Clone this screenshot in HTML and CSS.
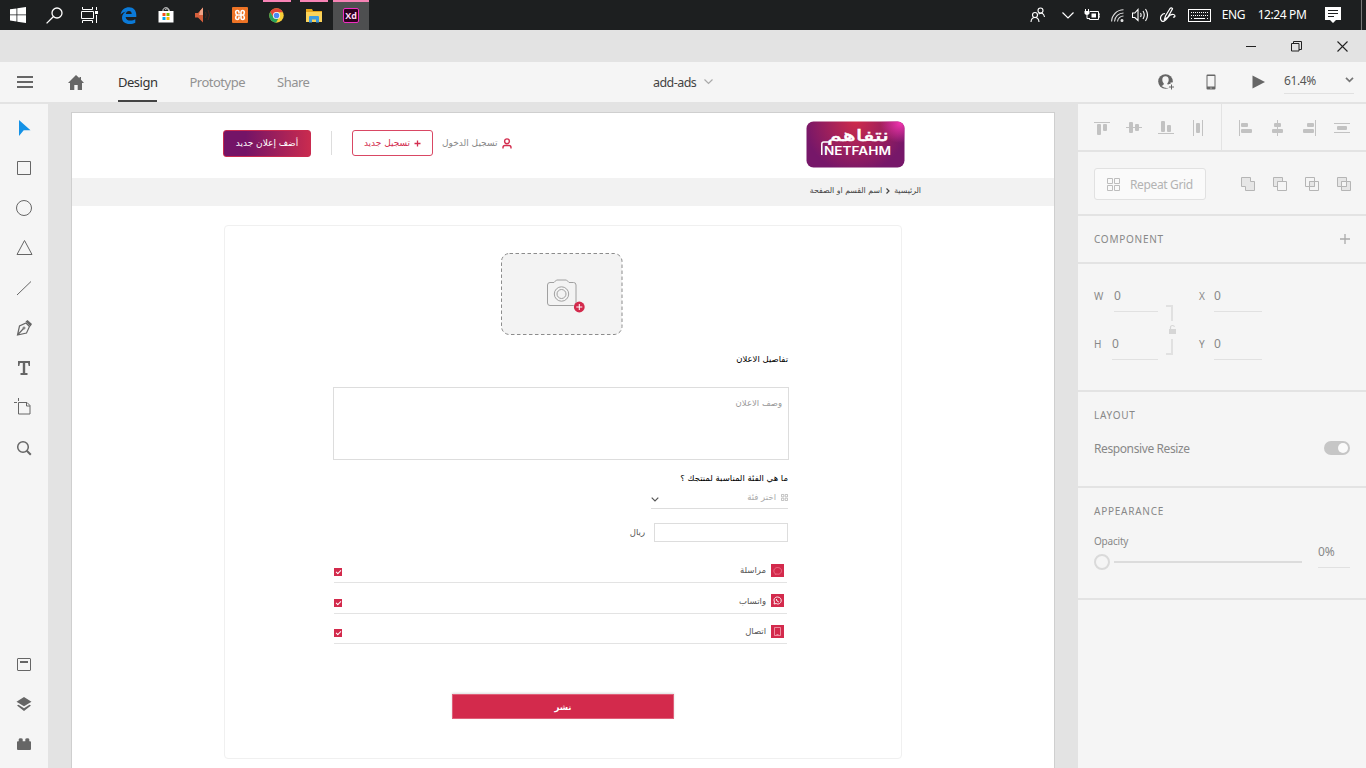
FILE: index.html
```html
<!DOCTYPE html>
<html lang="en">
<head>
<meta charset="utf-8">
<title>add-ads</title>
<link rel="stylesheet" href="styles.css">
</head>
<body>
<header class="taskbar">
  <div class="apps">
    <span class="app"><svg width="16" height="16" viewBox="0 0 16 16" fill="#fff"><path d="M0 2.300l6.500-.9v6.100H0zM7.300 1.300L16 0v7.500H7.300zM0 8.300h6.500v6.100L0 13.500zM7.300 8.300H16V16l-8.700-1.300z"/></svg></span>
    <span class="app"><svg width="17" height="17" viewBox="0 0 17 17" fill="none" stroke="#fff" stroke-width="1.300"><circle cx="11" cy="6" r="5"/><path d="M7.500 9.500L.6 16.400"/></svg></span>
    <span class="app"><svg width="18" height="16" viewBox="0 0 18 16" fill="none" stroke="#fff"><path d="M1.500 0v2.500h10V0M1.500 16v-2.500h10V16M.5 4.500h12v7H.5zM15.500 0v3M15.500 8v8"/><path fill="#fff" stroke="none" d="M14 4h3v3h-3z"/></svg></span>
    <span class="app wide"><svg width="17" height="17" viewBox="0 0 17 17" fill="#0b7ad8"><path d="M.6 7.500C1.500 2.500 5 .3 9 .3c4.600 0 7.300 3.300 7.300 7.700v1.900H5.600c.2 2.500 2.200 3.600 4.800 3.600 2 0 3.500-.5 4.900-1.300v3.500C14 16.500 12 17 9.700 17 5 17 2 14.500 2 10.700c0-3 1.700-5 4.300-6.200C4 5 1.900 5.800.6 7.500zm5.200-.6h5.900c0-1.900-.9-3-2.700-3-1.700 0-2.800 1.100-3.200 3z"/></svg></span>
    <span class="app wide"><svg width="16" height="16" viewBox="0 0 16 16"><path d="M5 5V3c0-3 6-3 6 0v2M7 3c1-2 4-1 4 1" fill="none" stroke="#ddd"/><path fill="#fff" d="M.5 4h15v11.500h-15z"/><path fill="#f25022" d="M4.500 6h3v3h-3z"/><path fill="#7fba00" d="M8.500 6h3v3h-3z"/><path fill="#00a4ef" d="M4.500 10h3v3h-3z"/><path fill="#ffb900" d="M8.500 10h3v3h-3z"/></svg></span>
    <span class="app wide"><svg width="16" height="16" viewBox="0 0 16 16"><path fill="#d65f3c" d="M0 6h3l5-5.500v15L3 10.500H0z"/><path fill="#f3a184" d="M5 4l3-3.500V8H4z"/><path d="M10.500 5q1.500 3 0 6M13 3q3 5 0 10" fill="none" stroke="#4a231c"/></svg></span>
    <span class="app wide"><svg width="16" height="16" viewBox="0 0 16 16"><rect width="16" height="16" rx="1" fill="#ee7325"/><path d="M7 6.500V5Q7 3.500 5.300 3.500T3.700 5.500 5.300 8h5.400Q12.300 7.500 12.300 5.500T10.700 3.500 9 5v6q0 1.500 1.700 1.500t1.600-2T10.700 8M5.300 8Q3.700 8.500 3.700 10.500t1.600 2T7 11V9.500" fill="none" stroke="#fff" stroke-width="1.600"/></svg></span>
    <span class="app wide"><i class="open"></i><svg width="15" height="15" viewBox="0 0 16 16"><circle cx="8" cy="8" r="7.700" fill="#f9cf38"/><path fill="#e14738" d="M1.300 4.200A7.700 7.700 0 0 1 14.800 4.400H8L4.800 10z"/><path fill="#27a35a" d="M1.300 4.200L4.800 10 10 11.300 7.500 15.700A7.700 7.700 0 0 1 1.300 4.200z"/><circle cx="8" cy="8" r="3.800" fill="#fff"/><circle cx="8" cy="8" r="3" fill="#4a8af4"/></svg></span>
    <span class="app wide"><i class="open"></i><svg width="16" height="15" viewBox="0 0 16 15"><path fill="#e6a51c" d="M0 1h6l1 2h9v3H0z"/><path fill="#fbd35a" d="M0 4h16v10H0z"/><path fill="#3d9be0" d="M3 14.500V9q0-1 1-1h8q1 0 1 1v5.500h-3V11.500H6v3z"/></svg></span>
    <span class="app current"><i class="open"></i><span class="xd">Xd</span></span>
  </div>
  <div class="tray">
    <svg width="16" height="16" viewBox="0 0 16 16" fill="none" stroke="#fff" stroke-width="1.100"><circle cx="5" cy="8" r="2.500"/><path d="M1 15q.3-4.500 4-4.500T9 15"/><circle cx="10.500" cy="3.500" r="2.500"/><path d="M8.500 7q5-2.500 6 3"/></svg>
    <svg width="12" height="7" viewBox="0 0 12 7" fill="none" stroke="#fff" stroke-width="1.200"><path d="M.5.5L6 6 11.500.500"/></svg>
    <svg width="16" height="12" viewBox="0 0 16 12" fill="none" stroke="#fff"><path d="M6 2.500h8.500v8h-9V9M14.500 5H16v3h-1.500M1.500 0v2M4.500 0v2M3 6v3.500h2.500"/><path fill="#fff" stroke="none" d="M.5 2h5v2.500q-2.500 3-5 0zM7.500 4.500H12v4H7.500z"/></svg>
    <svg width="13" height="13" viewBox="0 0 13 13" fill="none" stroke="#ddd" stroke-width="1.100"><path d="M.6 12.500A12 12 0 0 1 12.500.8M3.500 12.500a9 9 0 0 1 9-8.500M6.500 12.500a6 6 0 0 1 6-5.500"/><circle cx="11" cy="11.500" r="1" fill="#fff"/></svg>
    <svg width="17" height="14" viewBox="0 0 17 14" fill="none" stroke="#fff" stroke-width="1.100"><path d="M.5 5h2.300L6 1.500v11L2.800 9.500H.5zM8.500 5q1.200 2 0 4M11 3q2.500 4 0 8M13.500 1q4 6 0 12"/></svg>
    <svg width="16" height="16" viewBox="0 0 16 16" fill="none" stroke="#fff" stroke-width="1.200"><path d="M4.500 12.500L5.500 9 10 1.500q1.300-1.300 2.500.2L8 10zM5 6.500C2 6.500-.5 10 1 13s4.500 1 6.500-2 4-4 6-3.500 2 3-.5 2.500"/></svg>
    <svg width="23" height="13" viewBox="0 0 23 13" fill="none" stroke="#fff"><rect x=".5" y=".5" width="22" height="12"/><path d="M3 3.500h17M3 6.500h17" stroke-dasharray="1 1"/><path d="M3 9.500h1M6 9.500h11M19 9.500h1"/></svg>
    <span>ENG</span>
    <span>12:24 PM</span>
    <svg width="16" height="16" viewBox="0 0 16 16"><path fill="#fff" d="M0 0h16v13h-5l-3 3-3-3H0z"/><path d="M3 3.500h10M3 6.500h10M3 9.500h6" stroke="#1d1f20"/></svg>
  </div>
</header>

<div class="titlebar">
  <svg width="10" height="11" viewBox="0 0 10 11" stroke="#222"><path d="M0 5.500h10"/></svg>
  <svg width="11" height="11" viewBox="0 0 11 11" fill="none" stroke="#222"><path d="M.5 2.500h7.500v7.500H.5zM2.500 2.500v-2h8v8H8"/></svg>
  <svg width="11" height="11" viewBox="0 0 11 11" stroke="#222" stroke-width="1.100"><path d="M.5.5l10 10M10.500.5l-10 10"/></svg>
</div>

<nav class="toolbar">
  <div class="menu">
    <svg width="16" height="12" viewBox="0 0 16 12" fill="#666"><path d="M0 0h16v2H0zM0 5h16v2H0zM0 10h16v2H0z"/></svg>
    <svg width="16" height="15" viewBox="0 0 16 15" fill="#666"><path d="M8 0l3.500 3.300V2H13v2.700L16 8h-2v7H9.700v-5H6.300v5H2V8H0z"/></svg>
  </div>
  <div class="tabs"><span class="tab on">Design</span><span class="tab">Prototype</span><span class="tab">Share</span></div>
  <div class="doc">add-ads<svg width="9" height="6" viewBox="0 0 9 6" fill="none" stroke="#aaa" stroke-width="1.200"><path d="M.5.5l4 4 4-4"/></svg></div>
  <div class="actions">
    <svg width="17" height="16" viewBox="0 0 17 16"><circle cx="7.500" cy="7.500" r="7.300" fill="#666"/><path fill="#f5f5f5" d="M7.500 2.300c2.300 0 3.300 1.500 3.200 3.700-.1 1.600-.7 2.600-1.400 3.300 0 1.200.6 1.500 1.700 1.900V13.500q-3.500 1.500-7.500-1.500c1.700-.6 2.300-1 2.300-2.700C5 8.500 4.400 7.500 4.300 6c-.1-2.200.9-3.700 3.200-3.700zM10.500 10h2V8.500h4V16h-6z"/><path d="M13.500 10.500v5M11 13h5" stroke="#666"/></svg>
    <svg width="10" height="16" viewBox="0 0 10 16"><path fill="#666" fill-rule="evenodd" d="M1.500.5h7q1 0 1 1v13q0 1-1 1h-7q-1 0-1-1v-13q0-1 1-1zM1.500 2v10.500h7V2z"/><circle cx="5" cy="14" r=".6" fill="#fff"/></svg>
    <svg width="13" height="14" viewBox="0 0 13 14"><path fill="#666" d="M.5.5L13 7 .5 13.500z"/></svg>
    <div class="zoom">61.4%<svg width="9" height="6" viewBox="0 0 9 6" fill="none" stroke="#777" stroke-width="1.700"><path d="M1 .8l3.500 3.500L8 .8"/></svg></div>
  </div>
</nav>

<main class="workspace">
  <aside class="rail">
    <div class="tools">
      <svg viewBox="0 0 24 24"><path fill="#1592e6" d="M7 4l11.500 10.300h-6.800L7 20z"/></svg>
      <svg viewBox="0 0 24 24"><path d="M5.500 5.500h13v13h-13z"/></svg>
      <svg viewBox="0 0 24 24"><circle cx="12" cy="12" r="7.500"/></svg>
      <svg viewBox="0 0 24 24"><path d="M12.500 4.500l7.500 14H5z"/></svg>
      <svg viewBox="0 0 24 24"><path d="M5 19L19 5.500"/></svg>
      <svg viewBox="0 0 24 24"><path d="M5.500 19l2-9L14 7l3.500 3.500-3 6.500zM5.500 19l6-6.500" stroke-width="1.200"/><circle cx="12" cy="12" r="1"/><path fill="#666" stroke="none" d="M13.500 5.500l2-1.500 4.500 4-1.500 2.500z"/></svg>
      <svg viewBox="0 0 24 24"><path fill="#666" stroke="none" d="M6 5h12v5h-1.300L16 7h-2.800v10h2.300v2h-7v-2h2.300V7H8l-.7 3H6z"/></svg>
      <svg viewBox="0 0 24 24"><path d="M6.500 6.500h8.500l3 3v8.500H6.500zM14.500 6.500v3.500h3.500M6.500 2v3M2 6.500h3"/></svg>
      <svg viewBox="0 0 24 24"><circle cx="11" cy="11" r="5.300" stroke-width="1.500"/><path stroke-width="2" d="M14.800 14.800l4 4"/></svg>
    </div>
    <div class="tools">
      <svg viewBox="0 0 24 24"><rect x="5.500" y="6.500" width="13" height="12" rx=".5"/><path fill="#666" stroke="none" d="M8 9h8v2H8z"/></svg>
      <svg viewBox="0 0 24 24"><path fill="#666" stroke="none" d="M12 5l7.500 4.700-7.500 4.500-7.500-4.500zM5 13.500l1.500-.8 5.500 3.600 5.500-3.600 1.500.8L12 19z"/></svg>
      <svg viewBox="0 0 24 24"><path fill="#666" stroke="none" d="M5 10q0-.8 1-.8h.7V7.300q0-1 2-1t2 1v1.900h2.600V7.300q0-1 2-1t2 1v1.900h.7q1 0 1 .8v7q0 1-1 1H6q-1 0-1-1z"/></svg>
    </div>
  </aside>

  <section class="canvas">
    <article class="artboard" dir="rtl" lang="ar">
      <div class="site-head">
        <svg class="logo" width="99" height="47" viewBox="0 0 99 47">
          <defs>
            <radialGradient id="warm" gradientUnits="userSpaceOnUse" cx="50" cy="0" r="52"><stop offset="0" stop-color="#cf2b4b"/><stop offset="1" stop-color="#761769"/></radialGradient>
            <radialGradient id="glow" gradientUnits="userSpaceOnUse" cx="94" cy="2" r="20"><stop offset="0" stop-color="#ef34ad"/><stop offset="1" stop-color="#ef34ad" stop-opacity="0"/></radialGradient>
          </defs>
          <rect x=".5" y=".5" width="98" height="46" rx="7" fill="url(#warm)"/><rect x=".5" y=".5" width="98" height="46" rx="7" fill="url(#glow)"/>
          <text class="logo-ar" transform="translate(52 20) scale(1.500 1)" direction="rtl">نتفاهم</text>
          <path d="M15.800 34V23q0-2 2-2h5" fill="none" stroke="#fff" stroke-width="1.500"/>
          <text class="logo-en" x="51.500" y="34" textLength="67" lengthAdjust="spacingAndGlyphs" direction="ltr">NETFAHM</text>
        </svg>
        <div class="account">
          <span class="login"><svg width="10" height="11" viewBox="0 0 10 11" fill="none" stroke="#d32e4f" stroke-width="1.400"><circle cx="5" cy="3.300" r="2.400"/><path d="M1 10.500V9.500q0-2 2-2h4q2 0 2 2v1"/></svg><b class="t">تسجيل الدخول</b></span>
          <span class="register"><svg width="7" height="7" viewBox="0 0 7 7" stroke="#d32e4f" stroke-width="1.300"><path d="M3.500.5v6M.5 3.500h6"/></svg><b class="t">تسجيل جديد</b></span>
          <span class="rule"></span>
          <span class="add"><b class="t">أضف إعلان جديد</b></span>
        </div>
      </div>
      <div class="crumbs"><b class="t strong">الرئيسية</b><svg width="4" height="6" viewBox="0 0 4 6" fill="none" stroke="#444" stroke-width="1.200"><path d="M.5.5L3 3 .5 5.500"/></svg><b class="t">اسم القسم او الصفحة</b></div>
      <div class="card">
        <div class="upload">
          <svg width="122" height="83" viewBox="0 0 122 83"><rect x=".5" y=".5" width="120.500" height="81" rx="8" fill="#f3f3f3" stroke="#8c8c8c" stroke-dasharray="3.500 2.500"/><g fill="none" stroke="#a0a0a0"><path d="M49 29.500h4l2.500-2.500h10l2.500 2.500h4.500q2.500 0 2.500 2.500v18q0 2.500-2.500 2.500H49q-2.500 0-2.500-2.500V32q0-2.500 2.500-2.500z"/><circle cx="60.500" cy="41" r="7.200"/><circle cx="60.500" cy="41" r="4.500"/></g><circle cx="78.300" cy="54" r="5.400" fill="#d32a4c"/><path d="M78.300 51v6M75.300 54h6" stroke="#fff"/></svg>
        </div>
        <h2><b class="t">تفاصيل الاعلان</b></h2>
        <div class="desc"><b class="t">وصف الاعلان</b></div>
        <h2 class="ask"><b class="t">ما هي الفئة المناسبة لمنتجك ؟</b></h2>
        <div class="select"><svg width="7" height="7" viewBox="0 0 7 7" fill="none" stroke="#aaa" stroke-width=".7"><path d="M.5.5h2.300v2.300H.5zM4.200.5h2.300v2.300H4.200zM.5 4.200h2.300v2.300H.5zM4.200 4.200h2.300v2.300H4.200z"/></svg><b class="t">اختر فئة</b><svg class="drop" width="8" height="5" viewBox="0 0 8 5" fill="none" stroke="#555" stroke-width="1.200"><path d="M.7.7L4 4 7.300.7"/></svg></div>
        <div class="price"><span class="box"></span><b class="t">ريال</b></div>
        <div class="option"><svg class="chip" width="13" height="13" viewBox="0 0 13 13"><path fill="#d32a4c" d="M0 0h13v13H0z"/><path d="M4 9.500C1.500 7 3.500 3.500 6.500 3.500s5 2.500 3.500 5-4 1.500-4 1.500l-2 .3z" fill="none" stroke="#f07d94" stroke-width=".8"/></svg><b class="t">مراسلة</b><i class="check"></i></div>
        <div class="option second"><svg class="chip" width="13" height="13" viewBox="0 0 13 13"><path fill="#d32a4c" d="M0 0h13v13H0z"/><path d="M3 10l.5-2C2 5 4 3 6.500 3s4 2 3.700 4-2.700 4-5 2.500z" fill="none" stroke="#fff" stroke-width=".9"/><path d="M5.300 5q-.3 2 2.500 3" fill="none" stroke="#fff"/></svg><b class="t">واتساب</b><i class="check"></i></div>
        <div class="option"><svg class="chip" width="13" height="13" viewBox="0 0 13 13"><path fill="#d32a4c" d="M0 0h13v13H0z"/><path d="M3.500 2.500h6v8h-6zM5.500 9.500h2" fill="none" stroke="#f5a5b5" stroke-width=".8"/></svg><b class="t">اتصال</b><i class="check"></i></div>
        <div class="publish"><b class="t">نشر</b></div>
      </div>
    </article>
  </section>

  <aside class="panel">
    <div class="align">
      <div class="group">
        <svg viewBox="0 0 24 24"><path d="M4 6h16v1H4z"/><rect x="7" y="8" width="4" height="11" rx="1"/><rect x="13" y="8" width="4" height="7" rx="1"/></svg>
        <svg viewBox="0 0 24 24"><path d="M4 11h16v1H4z"/><rect x="7" y="6" width="4" height="11" rx="1"/><rect x="13" y="8" width="4" height="7" rx="1"/></svg>
        <svg viewBox="0 0 24 24"><path d="M4 17h16v1H4z"/><rect x="7" y="5" width="4" height="11" rx="1"/><rect x="13" y="9" width="4" height="7" rx="1"/></svg>
        <svg viewBox="0 0 24 24"><path d="M7 4h1v16H7zM16 4h1v16h-1z"/><rect x="10" y="7" width="4" height="10" rx="1"/></svg>
      </div>
      <div class="group second">
        <svg viewBox="0 0 24 24"><path d="M5 4h1v16H5z"/><rect x="7" y="7" width="7" height="4" rx="1"/><rect x="7" y="13" width="11" height="4" rx="1"/></svg>
        <svg viewBox="0 0 24 24"><path d="M11 4h1v16h-1z"/><rect x="8" y="7" width="7" height="4" rx="1"/><rect x="6" y="13" width="11" height="4" rx="1"/></svg>
        <svg viewBox="0 0 24 24"><path d="M17 4h1v16h-1z"/><rect x="9" y="7" width="7" height="4" rx="1"/><rect x="5" y="13" width="11" height="4" rx="1"/></svg>
        <svg viewBox="0 0 24 24"><path d="M4 7h16v1H4zM4 16h16v1H4z"/><rect x="7" y="10" width="10" height="4" rx="1"/></svg>
      </div>
    </div>
    <div class="repeat">
      <span class="grid-btn"><svg width="13" height="13" viewBox="0 0 13 13" fill="none" stroke="#bdbdbd"><path d="M.5.5h5v5h-5zM7.500.5h5v5h-5zM.5 7.500h5v5h-5zM7.500 7.500h5v5h-5z"/></svg>Repeat Grid</span>
      <div class="bool">
        <svg viewBox="0 0 14 14"><path fill="#e6e6e6" d="M.5.5h9v4h4v9h-9v-4h-4z"/></svg>
        <svg viewBox="0 0 14 14"><path fill="#e6e6e6" d="M.5.5h9v9h-9z"/><path fill="#f5f5f5" d="M4.500 4.500h9v9h-9z"/></svg>
        <svg viewBox="0 0 14 14"><path d="M.5.5h9v9h-9zM4.500 4.500h9v9h-9z"/><path fill="#e6e6e6" d="M4.500 4.500h5v5h-5z"/></svg>
        <svg viewBox="0 0 14 14"><path fill="#e6e6e6" d="M.5.5h9v9h-9zM4.500 4.500h9v9h-9z"/><path fill="#f5f5f5" d="M4.500 4.500h5v5h-5z"/></svg>
      </div>
    </div>
    <div class="component caps">COMPONENT<svg width="10" height="10" viewBox="0 0 10 10" stroke="#aaa" stroke-width="1.300"><path d="M5 0v10M0 5h10"/></svg></div>
    <div class="geometry">
      <div class="pair"><label>W</label><span class="val w">0</span><label>H</label><span class="val h">0</span></div>
      <svg class="link" width="10" height="50" viewBox="0 0 10 50"><path d="M0 1h6v15M6 34v15H0" fill="none" stroke="#e1e1e1" stroke-width="2"/><path fill="#d6d6d6" d="M3 24h7v5H3z"/><path d="M4.500 24v-1.500q0-2 2-2 1.500 0 2 1.200" fill="none" stroke="#d6d6d6" stroke-width="1.200"/></svg>
      <div class="pair xy"><label>X</label><span class="val">0</span><label>Y</label><span class="val">0</span></div>
    </div>
    <div class="layout"><div class="caps">LAYOUT</div><div class="resize"><span>Responsive Resize</span><i class="toggle"></i></div></div>
    <div class="appearance">
      <div class="caps">APPEARANCE</div>
      <div class="opacity"><div class="slider"><span>Opacity</span><div class="track"><i class="knob"></i><i class="line"></i></div></div><span class="percent">0%</span></div>
    </div>
  </aside>
</main>
</body>
</html>
```
FILE: styles.css
```css
* { box-sizing: border-box; }
body { margin: 0; width: 1366px; height: 768px; overflow: hidden; display: flex; flex-direction: column; background: #e3e3e3; font-family: "Noto Sans", "Open Sans", sans-serif; font-size: 12px; color: #555; }
svg { display: block; flex: none; }

.taskbar { height: 30px; display: flex; justify-content: space-between; background: #1d1f20; color: #fff; }
.apps { display: flex; }
.app { position: relative; width: 36px; height: 30px; display: grid; place-items: center; }
.app.wide { width: 37px; }
.app:nth-child(4) { margin-left: 2px; }
.open { position: absolute; top: 0; left: 5px; width: 28px; height: 2px; background: #f783b5; }
.current { margin-left: 1px; background: #4e4f50; }
.current .open { left: 0; width: 36px; }
.xd { width: 16px; height: 15px; border: 1px solid #f02fc2; border-radius: 2px; background: #2e001f; color: #ffd9f3; font: bold 9px/13px "Open Sans", sans-serif; text-align: center; }
.tray { display: grid; grid-template-columns: 30px 30px 18px 32px 14px 42px 20px 49px 48px 54px; place-items: center; width: 339px; margin-right: 4px; border-right: 1px solid #777; }
.tray span { white-space: nowrap; letter-spacing: -.4px; padding-bottom: 1px; }

.titlebar { height: 32px; display: flex; justify-content: flex-end; align-items: center; gap: 35px; padding-right: 18px; }

.toolbar { height: 40px; display: grid; grid-template-columns: 118px 535px 505px 208px; background: #f5f5f5; }
.menu { display: flex; align-items: center; gap: 35px; padding-left: 17px; }
.tabs { display: flex; gap: 32px; font-size: 13px; line-height: 41px; letter-spacing: -.5px; color: #929292; }
.tab { height: 40px; }
.tab.on { color: #333; border-bottom: 2px solid #444; }
.doc { display: flex; align-items: center; gap: 8px; font-size: 12.500px; letter-spacing: -.55px; color: #444; }
.actions { display: flex; align-items: center; }
.actions > svg:nth-child(2) { margin-left: 31px; }
.actions > svg:nth-child(3) { margin-left: 36px; }
.zoom { display: flex; align-items: center; justify-content: space-between; width: 70px; height: 26px; margin: 0 0 2px 19px; padding-bottom: 1px; border-bottom: 1px solid #e1e1e1; letter-spacing: -.4px; }

.workspace { flex: 1; display: grid; grid-template-columns: 48px 1030px 288px; padding-top: 2px; min-height: 0; }
.rail { display: flex; flex-direction: column; justify-content: space-between; background: #f5f5f5; padding: 4px 0; }
.tools { display: grid; grid-auto-rows: 40px; place-items: center; }
.tools svg { width: 24px; height: 24px; fill: none; stroke: #666; }
.tools path[fill="#1592e6"] { stroke: none; }

.canvas { padding: 8px 23px 0; overflow: hidden; min-height: 0; }
.artboard { height: 657px; background: #fff; border: 1px solid #cfcfcf; border-bottom: 0; font-family: "DejaVu Sans", sans-serif; }
.t { display: block; font-weight: 400; white-space: nowrap; }
.site-head { height: 65px; display: flex; justify-content: space-between; padding: 8px 149px 0 151px; }
.logo-ar, .logo-en { fill: #fff; text-anchor: middle; }
.logo-ar { font: 16px "DejaVu Sans", sans-serif; stroke: #fff; stroke-width: .5px; }
.logo-en { font: 600 12px "Inter", sans-serif; }
.account { display: flex; align-items: center; height: 42px; padding-top: 2px; font-size: 9px; }
.login { display: flex; align-items: center; gap: 5px; margin-right: -2px; color: #888; }
.register { display: flex; align-items: center; justify-content: center; gap: 4px; width: 81px; height: 26px; margin-right: 9px; border: 1px solid #d94764; border-radius: 3px; color: #d32e4f; }
.rule { width: 1px; height: 24px; margin: 0 20px; background: #ddd; }
.add { width: 88px; height: 27px; display: grid; place-items: center; border: 1px solid #c92b50; border-radius: 3px; background: linear-gradient(90deg, #741467 25%, #c92b4f); color: #fff; }
.add .t { margin-top: -1px; }
.crumbs { height: 28px; display: flex; align-items: center; gap: 4px; padding: 0 133px 3px; background: #f2f2f2; font-size: 7.800px; color: #444; }
.card { width: 678px; height: 534px; margin: 19px 152px 0 0; padding: 27px 112px 0 108px; border: 1px solid #f0f0f0; border-radius: 4px; }
.upload { display: flex; justify-content: center; height: 83px; margin-left: 2px; }
h2 { margin: 0 1px 0 0; height: 51px; padding-top: 16px; font-size: 8.500px; line-height: 14px; color: #000; }
.desc { width: 456px; height: 73px; padding: 9px 6px; border: 1px solid #ddd; font-size: 8.500px; color: #999; line-height: 12px; }
.ask { height: 30px; padding-top: 11px; }
.select { display: flex; align-items: center; width: 137px; height: 19px; margin: 0 1px 1px 0; padding-bottom: 4px; gap: 5px; border-bottom: 1px solid #ddd; font-size: 8.500px; color: #aaa; }
.drop { margin: 4px auto 0 0; }
.price { display: flex; align-items: center; gap: 9px; margin: 13px 1px 11px 0; height: 20px; font-size: 8.500px; }
.box { width: 134px; height: 19px; border: 1px solid #ddd; }
.option { display: flex; align-items: center; height: 30px; width: 453px; gap: 5px; margin-right: 2px; padding: 5px 3px 0 0; border-bottom: 1px solid #e3e3e3; font-size: 8.500px; color: #555; }
.option.second { height: 31px; }
.check { width: 8px; height: 8px; margin: 4px auto 0 0; background: #d32a4c; position: relative; }
.check::after { content: ""; position: absolute; left: 2px; top: 2px; width: 4px; height: 2px; border: solid #fff; border-width: 0 0 1px 1px; transform: rotate(-45deg); }
.publish { width: 222px; height: 25px; margin: 50px 115px 0 auto; display: grid; place-items: center; background: #d32a4c; border: 1px solid #df6079; box-shadow: 0 -1px 2px #ddd; color: #fff; font-size: 8.500px; }
.publish .t { font-weight: 700; }

.panel { display: flex; flex-direction: column; background: #f5f5f5; color: #888; }
.panel > div { border-bottom: 2px solid #e3e3e3; }
.align { display: flex; height: 48px; }
.group { display: flex; gap: 8px; padding: 12px 0 0 12px; width: 143px; }
.group.second { width: 145px; border-left: 1px solid #e3e3e3; }
.group svg { width: 24px; height: 24px; fill: #c2c2c2; }
.repeat { display: flex; align-items: center; justify-content: space-between; height: 64px; padding: 2px 15px 0 16px; }
.grid-btn { display: flex; align-items: center; gap: 10px; width: 112px; height: 32px; padding-left: 12px; border: 1px solid #e1e1e1; border-radius: 3px; background: #fafafa; color: #b3b3b3; letter-spacing: -.35px; white-space: nowrap; }
.bool { display: flex; gap: 18px; }
.bool svg { width: 14px; height: 14px; fill: none; stroke: #b5b5b5; }
.caps { font-size: 10px; letter-spacing: .75px; color: #888; }
.component { height: 48px; display: flex; align-items: center; justify-content: space-between; padding: 0 16px; }
.geometry { display: flex; height: 128px; padding: 17px 16px; }
.pair { display: grid; grid-template-columns: 20px 44px; grid-auto-rows: 31px 31px; row-gap: 17px; line-height: 30px; }
.pair label { font-size: 10px; }
.val { border-bottom: 1px solid #e1e1e1; }
.val.h { margin-left: -2px; padding-left: 0; }
.link { margin: 24px 0 0 8px; }
.pair.xy { grid-template-columns: 15px 48px; margin-left: 23px; }
.layout { height: 96px; padding: 16px 16px 0; }
.resize { display: flex; align-items: center; justify-content: space-between; margin-top: 18px; letter-spacing: -.4px; }
.toggle { width: 26px; height: 14px; margin-bottom: 2px; border-radius: 7px; background: #c6c6c6; display: flex; justify-content: flex-end; padding: 2px; }
.toggle::after { content: ""; width: 10px; height: 10px; border-radius: 50%; background: #fafafa; }
.appearance { height: 112px; padding: 16px 16px 0; }
.opacity { display: flex; gap: 16px; margin-top: 16px; font-size: 10px; letter-spacing: -.2px; }
.slider { width: 208px; line-height: 14px; }
.track { display: flex; align-items: center; gap: 4px; margin-top: 6px; }
.knob { width: 16px; height: 16px; border: 2px solid #dadada; border-radius: 50%; }
.line { flex: 1; height: 2px; background: #dcdcdc; }
.percent { width: 32px; height: 25px; margin-top: 9px; padding-top: 1px; border-bottom: 1px solid #e1e1e1; font-size: 12px; line-height: 16px; }
```
